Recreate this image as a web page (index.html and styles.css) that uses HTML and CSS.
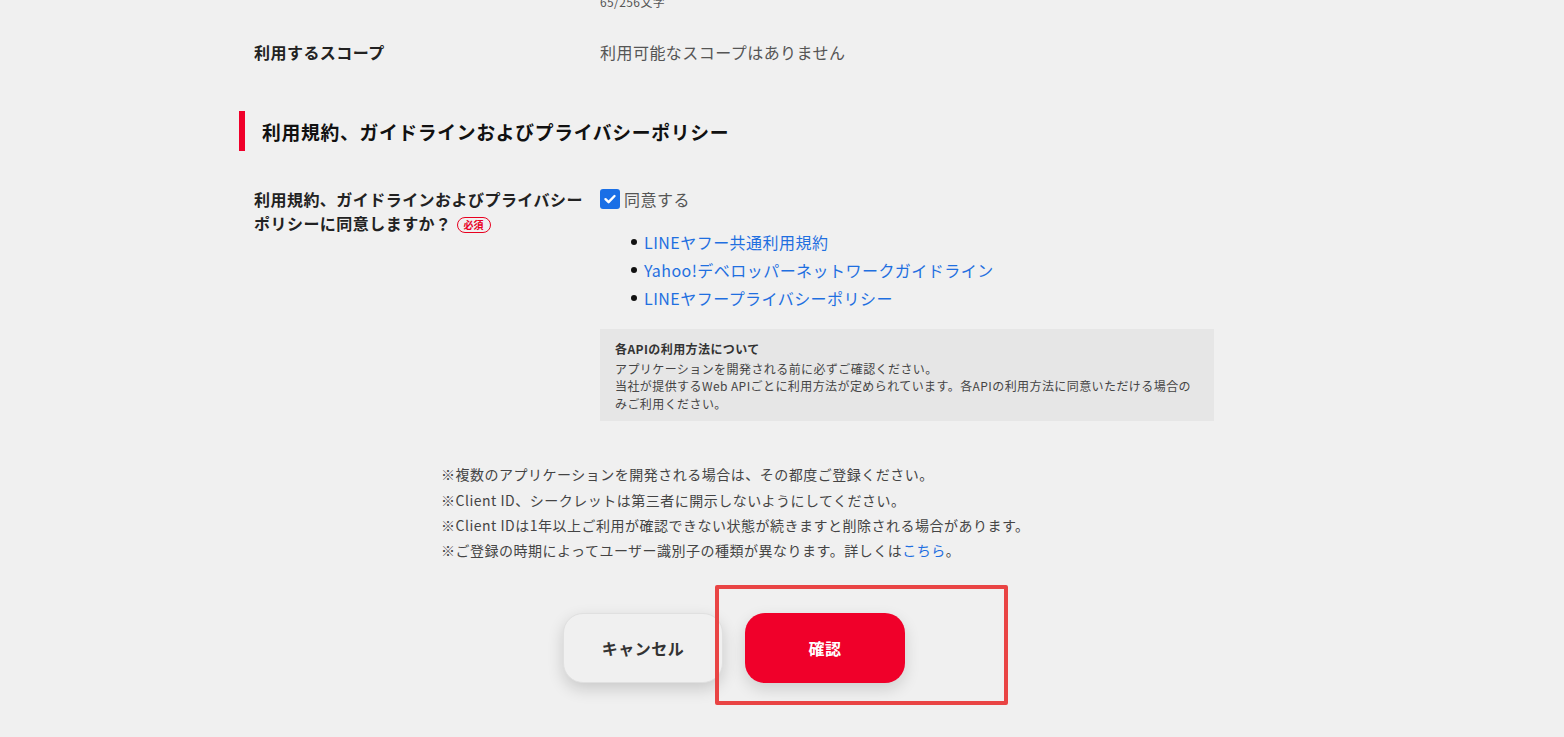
FILE: index.html
```html
<!DOCTYPE html>
<html lang="ja">
<head>
<meta charset="utf-8">
<link rel="stylesheet" href="styles.css">
</head>
<body>
<div class="container">
  <div class="counter">65/256文字</div>

  <div class="row scope">
    <div class="label">利用するスコープ</div>
    <div class="value muted">利用可能なスコープはありません</div>
  </div>

  <h2 class="section-title">利用規約、ガイドラインおよびプライバシーポリシー</h2>

  <div class="row agree">
    <div class="label">利用規約、ガイドラインおよびプライバシーポリシーに同意しますか？<span class="badge">必須</span></div>
    <div class="value">
      <label class="check">
        <span class="box"><svg viewBox="0 0 20 20" width="20" height="20"><path d="M5.5 10.2 L8.6 13.2 L14.5 7" fill="none" stroke="#fff" stroke-width="2.4" stroke-linecap="round" stroke-linejoin="round"/></svg></span>
        <span class="check-text">同意する</span>
      </label>
      <ul class="links">
        <li><a href="#">LINEヤフー共通利用規約</a></li>
        <li><a href="#">Yahoo!デベロッパーネットワークガイドライン</a></li>
        <li><a href="#">LINEヤフープライバシーポリシー</a></li>
      </ul>
      <div class="info">
        <div class="info-title">各APIの利用方法について</div>
        <p>アプリケーションを開発される前に必ずご確認ください。<br>当社が提供するWeb APIごとに利用方法が定められています。各APIの利用方法に同意いただける場合のみご利用ください。</p>
      </div>
    </div>
  </div>

  <div class="notes">
    <p>※複数のアプリケーションを開発される場合は、その都度ご登録ください。</p>
    <p>※Client ID、シークレットは第三者に開示しないようにしてください。</p>
    <p>※Client IDは1年以上ご利用が確認できない状態が続きますと削除される場合があります。</p>
    <p>※ご登録の時期によってユーザー識別子の種類が異なります。詳しくは<a href="#">こちら</a>。</p>
  </div>

  <div class="actions">
    <button class="btn btn-cancel">キャンセル</button>
    <button class="btn btn-confirm">確認</button>
  </div>
</div>
<div class="highlight"></div>
</body>
</html>
```

FILE: styles.css
```css
html, body {
  margin: 0;
  padding: 0;
}
body {
  background: #f0f0f0;
  font-family: "Noto Sans CJK JP", "Noto Sans", sans-serif;
  color: #222;
  overflow: hidden;
  height: 737px;
  position: relative;
  letter-spacing: 0.46px;
}
.container {
  margin-left: 239px;
  width: 990px;
}
.counter {
  margin-top: -7px;
  padding-left: 361px;
  font-size: 12px;
  line-height: 18px;
  color: #555;
  letter-spacing: 0.4px;
}
.row {
  display: grid;
  grid-template-columns: 361px 1fr;
}
.label {
  padding-left: 15px;
  padding-right: 8px;
  font-size: 16px;
  font-weight: 700;
  line-height: 24px;
  color: #222;
}
.value {
  font-size: 16px;
  line-height: 24px;
}
.muted {
  color: #555;
}
.scope {
  margin-top: 29px;
}
.section-title {
  margin: 47px 0 0;
  height: 40px;
  border-left: 6px solid #f0002a;
  padding-left: 17px;
  display: flex;
  align-items: center;
  font-size: 18.8px;
  letter-spacing: 0.7px;
  font-weight: 700;
  color: #111;
}
.agree {
  margin-top: 36px;
}
.badge {
  display: inline-block;
  margin-left: 5px;
  width: 34px;
  height: 16px;
  box-sizing: border-box;
  border: 1.5px solid #e8001f;
  border-radius: 8px;
  color: #e8001f;
  font-size: 10px;
  line-height: 13px;
  letter-spacing: 0;
  text-align: center;
  vertical-align: 1px;
  font-weight: 700;
}
.check {
  display: flex;
  align-items: center;
  gap: 4px;
}
.box {
  width: 20px;
  height: 20px;
  border-radius: 3px;
  background: #1a6fe6;
  display: flex;
}
.check-text {
  color: #555;
}
.links {
  list-style: none;
  margin: 17px 0 0;
  padding: 0 0 0 31px;
}
.links li {
  display: flex;
  align-items: center;
  line-height: 28px;
}
.links li::before {
  content: "";
  width: 6px;
  height: 6px;
  border-radius: 50%;
  background: #111;
  margin-right: 7px;
  flex: none;
}
a {
  color: #1f6fe0;
  text-decoration: none;
}
.info {
  margin-top: 17px;
  width: 614px;
  box-sizing: border-box;
  background: #e6e6e6;
  padding: 11px 15px 9px;
  font-size: 12px;
  line-height: 17.6px;
  letter-spacing: 0.42px;
  color: #444;
}
.info-title {
  font-weight: 700;
  color: #333;
  margin-bottom: 2px;
}
.info p {
  margin: 0;
}
.notes {
  margin-top: 41px;
  padding-left: 202px;
  font-size: 14px;
  line-height: 25.3px;
  letter-spacing: 0.5px;
  color: #444;
}
.notes p {
  margin: 0;
}
.actions {
  margin-top: 49px;
  display: flex;
  justify-content: center;
  gap: 22px;
}
.btn {
  width: 160px;
  height: 70px;
  border-radius: 20px;
  font-family: inherit;
  font-size: 16px;
  font-weight: 700;
  letter-spacing: 0.5px;
  cursor: pointer;
}
.btn-cancel {
  background: #f0f0f0;
  border: 1px solid #e0e0e0;
  color: #333;
  box-shadow: 0 6px 16px rgba(0, 0, 0, 0.16);
}
.btn-confirm {
  background: #f0002a;
  border: none;
  color: #fff;
  box-shadow: 0 6px 16px rgba(0, 0, 0, 0.14);
}
.highlight {
  position: absolute;
  left: 715px;
  top: 585px;
  width: 293px;
  height: 120px;
  box-sizing: border-box;
  border: 4px solid #e94444;
  border-radius: 2px;
}
```
